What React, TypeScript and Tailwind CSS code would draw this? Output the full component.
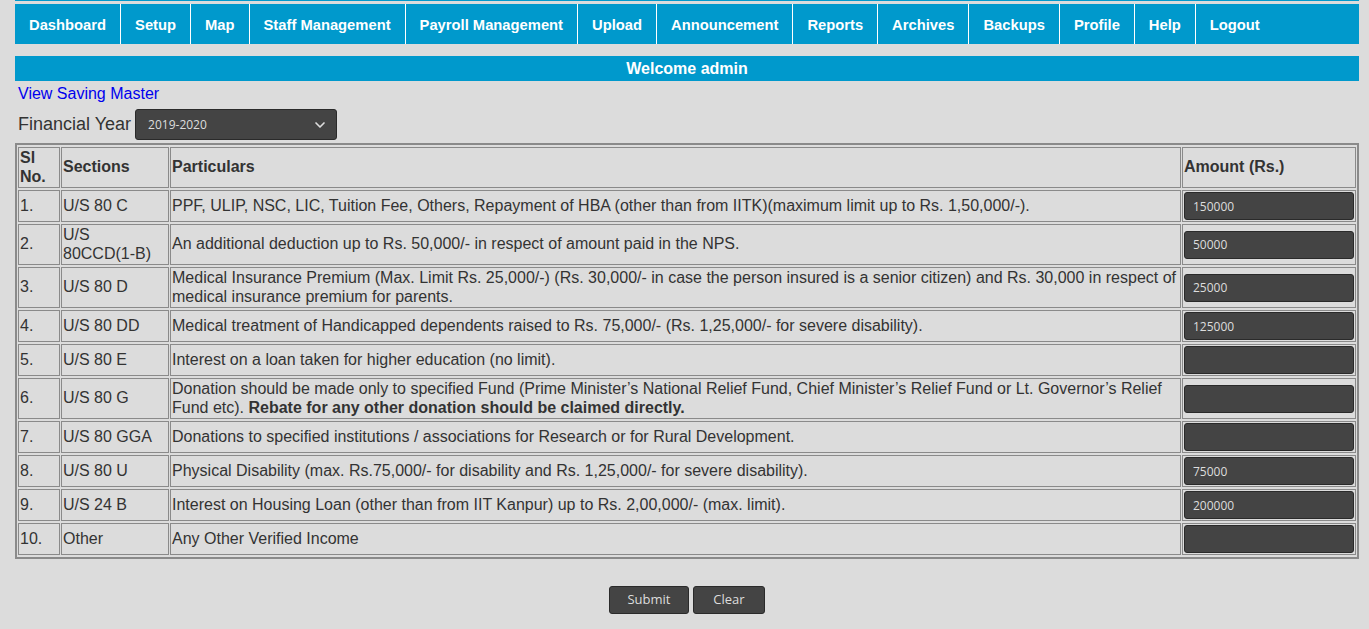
import { ChevronDown } from 'lucide-react';

const navItems = [
  'Dashboard',
  'Setup',
  'Map',
  'Staff Management',
  'Payroll Management',
  'Upload',
  'Announcement',
  'Reports',
  'Archives',
  'Backups',
  'Profile',
  'Help',
  'Logout',
];

type Row = {
  no: string;
  section: React.ReactNode;
  particulars: React.ReactNode;
  amount: string;
};

const rows: Row[] = [
  {
    no: '1.',
    section: 'U/S 80 C',
    particulars:
      'PPF, ULIP, NSC, LIC, Tuition Fee, Others, Repayment of HBA (other than from IITK)(maximum limit up to Rs. 1,50,000/-).',
    amount: '150000',
  },
  {
    no: '2.',
    section: (
      <>
        U/S <span className="whitespace-nowrap">80CCD(1-B)</span>
      </>
    ),
    particulars: 'An additional deduction up to Rs. 50,000/- in respect of amount paid in the NPS.',
    amount: '50000',
  },
  {
    no: '3.',
    section: 'U/S 80 D',
    particulars:
      'Medical Insurance Premium (Max. Limit Rs. 25,000/-) (Rs. 30,000/- in case the person insured is a senior citizen) and Rs. 30,000 in respect of medical insurance premium for parents.',
    amount: '25000',
  },
  {
    no: '4.',
    section: 'U/S 80 DD',
    particulars:
      'Medical treatment of Handicapped dependents raised to Rs. 75,000/- (Rs. 1,25,000/- for severe disability).',
    amount: '125000',
  },
  {
    no: '5.',
    section: 'U/S 80 E',
    particulars: 'Interest on a loan taken for higher education (no limit).',
    amount: '',
  },
  {
    no: '6.',
    section: 'U/S 80 G',
    particulars: (
      <>
        Donation should be made only to specified Fund (Prime Minister’s National Relief Fund, Chief Minister’s Relief
        Fund or Lt. Governor’s Relief Fund etc). <b>Rebate for any other donation should be claimed directly.</b>
      </>
    ),
    amount: '',
  },
  {
    no: '7.',
    section: 'U/S 80 GGA',
    particulars: 'Donations to specified institutions / associations for Research or for Rural Development.',
    amount: '',
  },
  {
    no: '8.',
    section: 'U/S 80 U',
    particulars: 'Physical Disability (max. Rs.75,000/- for disability and Rs. 1,25,000/- for severe disability).',
    amount: '75000',
  },
  {
    no: '9.',
    section: 'U/S 24 B',
    particulars: 'Interest on Housing Loan (other than from IIT Kanpur) up to Rs. 2,00,000/- (max. limit).',
    amount: '200000',
  },
  {
    no: '10.',
    section: 'Other',
    particulars: 'Any Other Verified Income',
    amount: '',
  },
];

const cell = 'border border-[#8a8a8a] p-px align-middle';

export default function App() {
  return (
    <div className="min-h-[629px] bg-[#dcdcdc] pl-[15px] pr-[10px] font-['Liberation_Sans',Arial,sans-serif] text-[#333]">
      {/* top menu */}
      <div className="h-px bg-[#0099cc]" />
      <ul className="mt-[3px] flex h-10 bg-[#0099cc]">
        {navItems.map((item, i) => (
          <li
            key={item}
            className={`flex items-center px-[14px] pt-[2px] text-[14.75px] font-bold text-white ${i > 0 ? 'border-l border-white' : ''}`}
          >
            {item}
          </li>
        ))}
      </ul>

      <div className="mt-3 flex h-[25px] items-center justify-center bg-[#0099cc] text-base font-bold text-white">
        Welcome admin
      </div>

      <div className="mt-[4px] pl-[3px] text-base leading-[18px]">
        <a href="#" className="text-[#0000ee]">
          View Saving Master
        </a>
      </div>

      <div className="mt-[6px] flex items-center pl-[3px]">
        <span className="mr-[4px] text-[18px]">Financial Year</span>
        <div className="flex h-[31px] w-[202px] items-center justify-between rounded-[3px] border border-[#2a2a2a] bg-[#444] pl-3 pr-2 font-['Open_Sans',sans-serif] text-xs text-[#ddd]">
          <span>2019-2020</span>
          <ChevronDown size={16} strokeWidth={2.5} className="text-[#ddd]" />
        </div>
      </div>

      <table className="mt-[3px] w-full table-fixed border-separate border-spacing-x-px border-spacing-y-[2px] border-2 border-[#8a8a8a] text-base leading-normal">
        <thead>
          <tr className="text-left font-bold leading-[18.5px]">
            <th className={`${cell} w-[42px]`}>
              Sl
              <br />
              No.
            </th>
            <th className={`${cell} w-[108px]`}>Sections</th>
            <th className={cell}>Particulars</th>
            <th className={`${cell} w-[174px]`}>Amount (Rs.)</th>
          </tr>
        </thead>
        <tbody>
          {rows.map((r) => (
            <tr key={r.no}>
              <td className={`${cell} leading-[18.5px]`}>{r.no}</td>
              <td className={`${cell} leading-[18.5px]`}>{r.section}</td>
              <td className={`${cell} leading-[18.5px]`}>{r.particulars}</td>
              <td className={cell}>
                <input
                  readOnly
                  value={r.amount}
                  className="block h-[28px] w-full rounded-[3px] border border-[#2a2a2a] bg-[#444] pl-2 font-['Open_Sans',sans-serif] text-xs text-[#ddd] outline-none"
                />
              </td>
            </tr>
          ))}
        </tbody>
      </table>

      <div className="mt-[27px] flex justify-center gap-1">
        <button className="h-[28px] w-[80px] rounded-[3px] border border-[#2a2a2a] bg-[#444] font-['Open_Sans',sans-serif] text-[13px] text-[#ddd]">
          Submit
        </button>
        <button className="h-[28px] w-[72px] rounded-[3px] border border-[#2a2a2a] bg-[#444] font-['Open_Sans',sans-serif] text-[13px] text-[#ddd]">
          Clear
        </button>
      </div>
    </div>
  );
}
